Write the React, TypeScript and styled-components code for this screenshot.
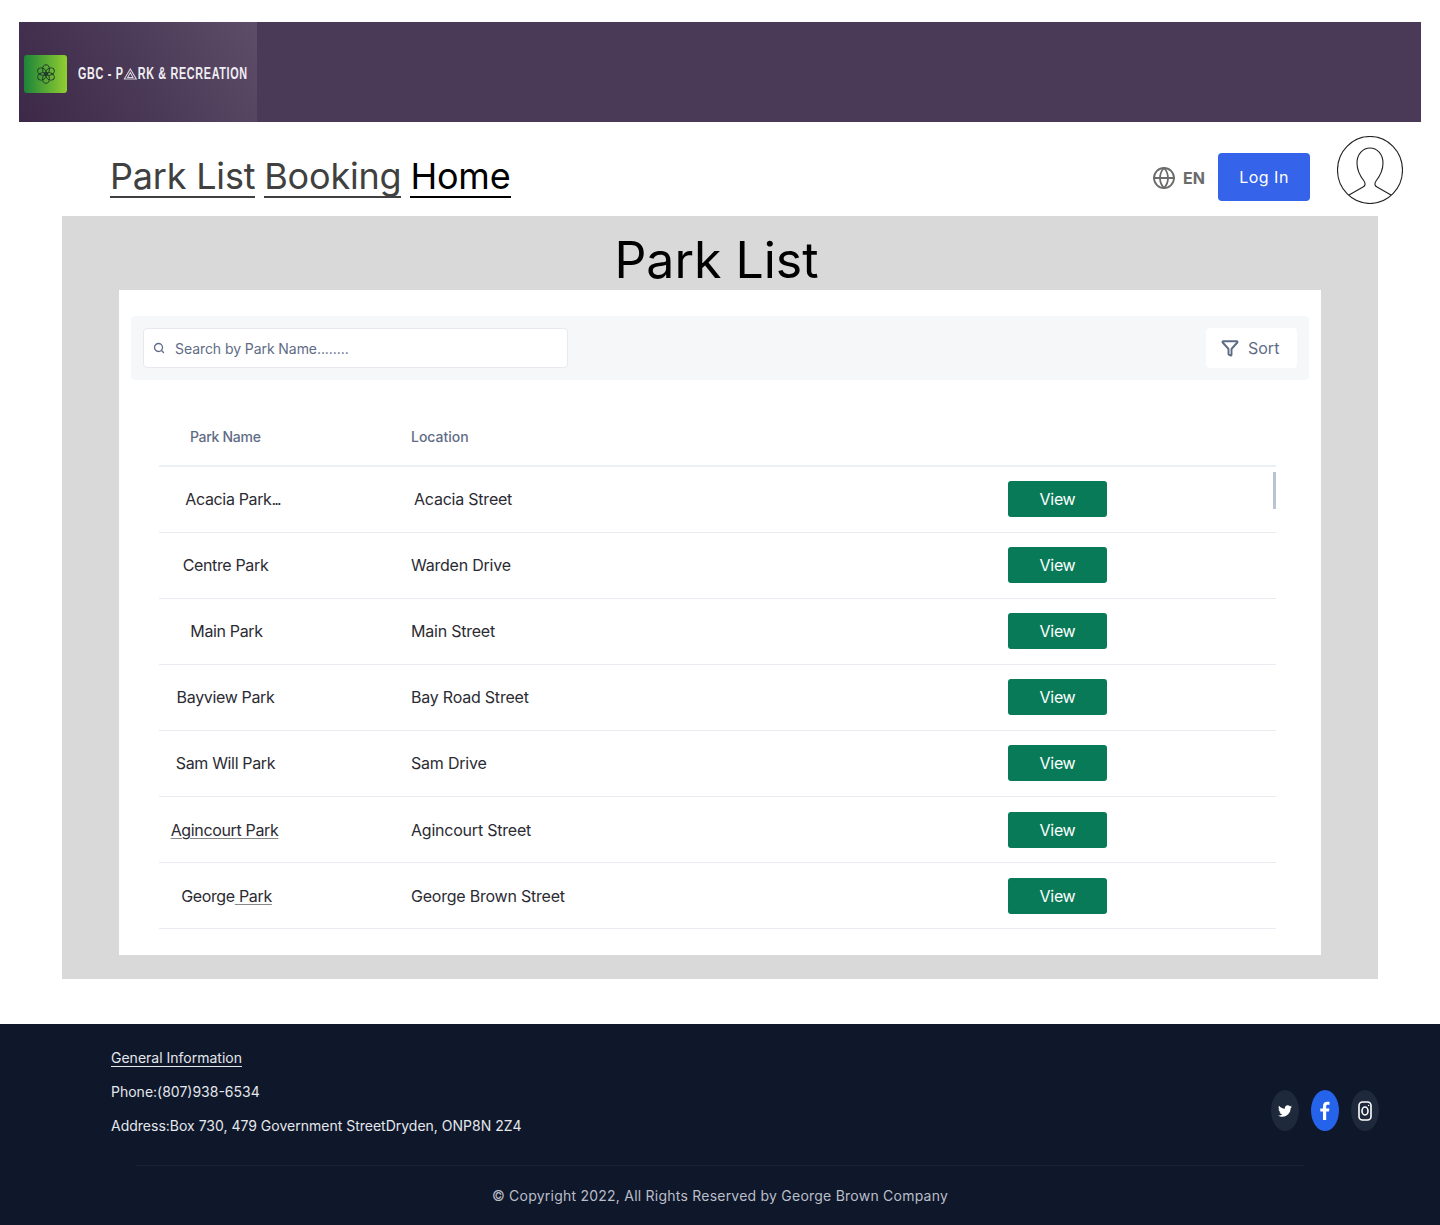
import React from "react";
import styled, { createGlobalStyle } from "styled-components";
import { Globe, Search, Funnel } from "lucide-react";
import { FaTwitter } from "react-icons/fa";

const Global = createGlobalStyle`
  html, body { margin: 0; padding: 0; background: #fff; }
  body { font-family: Inter, "Liberation Sans", sans-serif; }
  #root { padding-top: 22px; }
  * { box-sizing: border-box; }
`;

const Banner = styled.header`
  margin: 0 19px;
  height: 100px;
  background: #4b3a57;
`;
const Brand = styled.div`
  width: 238px;
  height: 100%;
  padding: 33px 0 0 5px;
  display: flex;
  align-items: flex-start;
  gap: 11px;
  background: linear-gradient(60deg, #3d2848 0%, #4b3a57 50%, #5d4d69 100%);
`;
const LogoTile = styled.div`
  flex: none;
  width: 43px;
  height: 38px;
  border-radius: 3px;
  display: flex;
  align-items: center;
  justify-content: center;
  background: linear-gradient(90deg, #1c8439 0%, #92ce31 100%);
`;
const BrandName = styled.div`
  flex: none;
  display: flex;
  align-items: center;
  height: 38px;
  color: #f1eef3;
  font-family: "Liberation Sans", sans-serif;
  font-weight: 700;
  font-size: 16px;
  letter-spacing: 1px;
  white-space: pre;
  transform: scaleX(0.675);
  transform-origin: left center;
`;

const NavBar = styled.nav`
  height: 94px;
  padding: 0 37px 0 110px;
  display: flex;
  align-items: center;
`;
const NavLinks = styled.div`
  display: flex;
  gap: 9px;
  margin-top: 18px;
`;
const NavLink = styled.a<{ $active?: boolean }>`
  font-family: Inter, sans-serif;
  font-size: 36px;
  line-height: 36px;
  padding-bottom: 2px;
  letter-spacing: -0.2px;
  color: ${(p) => (p.$active ? "#000" : "#404040")};
  border-bottom: 2px solid ${(p) => (p.$active ? "#000" : "#404040")};
`;
const NavRight = styled.div`
  margin: 2px 0 0 auto;
  display: flex;
  align-items: center;
`;
const Lang = styled.div`
  display: flex;
  align-items: center;
  gap: 7px;
  color: #6b6b6b;
  font-size: 16px;
  font-weight: 700;
  margin-top: 16px;
`;
const LoginButton = styled.button`
  width: 92px;
  height: 48px;
  margin: 14px 27px 0 13px;
  border: 0;
  border-radius: 4px;
  background: #3563e9;
  color: #fff;
  font-family: Inter, sans-serif;
  font-size: 16px;
  letter-spacing: 0.5px;
`;

const Panel = styled.main`
  margin: 0 62px;
  padding-bottom: 24px;
  background: #d9d9d9;
`;
const Title = styled.h1`
  margin: 0;
  height: 74px;
  padding-right: 7px;
  text-align: center;
  font-weight: 400;
  font-size: 50px;
  line-height: 88px;
  color: #000;
`;
const Card = styled.section`
  margin: 0 57px;
  height: 665px;
  padding: 26px 12px 0;
  background: #fff;
`;
const Toolbar = styled.div`
  height: 64px;
  padding: 12px;
  display: flex;
  justify-content: space-between;
  background: #f6f7f9;
  border-radius: 4px;
`;
const SearchBox = styled.div`
  width: 425px;
  height: 40px;
  padding: 0 9px;
  display: flex;
  align-items: center;
  gap: 10px;
  background: #fff;
  border: 1px solid #e7e9ee;
  border-radius: 4px;
  color: #5f6c86;
  font-size: 14px;
  letter-spacing: -0.07px;
`;
const SortButton = styled.button`
  width: 91px;
  height: 40px;
  padding: 0 0 0 15px;
  border: 0;
  border-radius: 4px;
  background: #fff;
  color: #5f6c86;
  font-family: Inter, sans-serif;
  font-size: 16px;
  display: flex;
  align-items: center;
  justify-content: flex-start;
  gap: 9px;
`;
const Table = styled.div`
  position: relative;
  margin: 0 33px 0 28px;
`;
const HeadRow = styled.div`
  height: 86.5px;
  display: grid;
  grid-template-columns: 252px 1fr;
  align-items: end;
  padding-bottom: 18.5px;
  border-bottom: 2px solid #edf0f3;
  color: #5f6c86;
  font-size: 14px;
  font-weight: 500;
  line-height: 18px;
`;
const HeadName = styled.div`
  padding-left: 31px;
  letter-spacing: -0.3px;
`;
const Row = styled.div`
  height: 66.1px;
  display: grid;
  grid-template-columns: 252px 597px 99px;
  align-items: center;
  border-bottom: 1px solid #e8ebf0;
  color: #2b2b33;
  font-size: 16px;
  letter-spacing: -0.22px;
`;
const NameCell = styled.div<{ $shift: number }>`
  width: ${(p) => 133 + p.$shift}px;
  text-align: center;
  white-space: nowrap;
  letter-spacing: -0.35px;
`;
const LocationCell = styled.div<{ $shift: number }>`
  padding-left: ${(p) => p.$shift}px;
`;
const Linked = styled.span`
  text-decoration: underline;
  text-decoration-thickness: 1px;
  text-underline-offset: 2px;
  text-decoration-color: #888;
`;
const TightDots = styled.span`
  letter-spacing: -1.9px;
`;
const ViewButton = styled.button`
  height: 36px;
  border: 0;
  border-radius: 3px;
  background: #087a58;
  color: #fff;
  font-family: Inter, sans-serif;
  font-size: 16px;
  letter-spacing: -0.3px;
`;
const Thumb = styled.div`
  position: absolute;
  top: 91.5px;
  right: 0;
  width: 3px;
  height: 37px;
  background: #bcc4d2;
`;

const Footer = styled.footer`
  margin-top: 45px;
  height: 201px;
  padding-top: 25px;
  background: #0f172a;
  color: #e4e7ec;
  font-size: 14px;
`;
const FooterTop = styled.div`
  height: 116px;
  padding: 0 61px 0 111px;
  display: flex;
  justify-content: space-between;
  align-items: flex-start;
`;
const InfoList = styled.div`
  display: flex;
  flex-direction: column;
  gap: 17px;
  line-height: 17px;
`;
const InfoHeading = styled.a`
  text-decoration: underline;
  text-underline-offset: 3px;
`;
const Socials = styled.div`
  display: flex;
  gap: 12px;
  margin-top: 41px;
`;
const Social = styled.a<{ $active?: boolean }>`
  width: 28px;
  height: 41px;
  border-radius: 50%;
  display: flex;
  align-items: center;
  justify-content: center;
  color: #fff;
  background: ${(p) => (p.$active ? "#2563eb" : "#1e293b")};
`;
const Divider = styled.div`
  margin: 0 135px;
  height: 1px;
  background: #1a2336;
`;
const Copyright = styled.div`
  margin-top: 21px;
  text-align: center;
  line-height: 17px;
  letter-spacing: 0.23px;
  color: #b9bec8;
  font-family: Inter, sans-serif;
`;

const parks = [
  { name: <>Acacia Park<TightDots>...</TightDots></>, shift: 14, loc: "Acacia Street", locShift: 3 },
  { name: <>Centre Park</>, shift: 0, loc: "Warden Drive", locShift: 0 },
  { name: <>Main Park</>, shift: 2, loc: "Main Street", locShift: 0 },
  { name: <>Bayview Park</>, shift: 0, loc: "Bay Road Street", locShift: 0 },
  { name: <>Sam Will Park</>, shift: 0, loc: "Sam Drive", locShift: 0 },
  { name: <Linked>Agincourt Park</Linked>, shift: -2, loc: "Agincourt Street", locShift: 0 },
  { name: <>George<Linked> Park</Linked></>, shift: 2, loc: "George Brown Street", locShift: 0 },
];

const FlowerMark = () => (
  <svg width="20" height="20" viewBox="0 0 20 20" fill="none" stroke="#1f3a2a" strokeWidth="1">
    {[0, 60, 120, 180, 240, 300].map((a) => (
      <ellipse key={a} cx="10" cy="5.2" rx="3.4" ry="4.4" transform={`rotate(${a} 10 10)`} />
    ))}
    <circle cx="10" cy="10" r="1.8" />
  </svg>
);

const TriangleMark = () => (
  <svg width="21" height="12" viewBox="0 0 13 12" preserveAspectRatio="none" fill="none" stroke="#d8d3dc" strokeWidth="1">
    <path d="M6.5 1 12 11H1Z" />
    <path d="M6.5 4.5 9 9.5H4Z" />
  </svg>
);

const AvatarMark = () => (
  <svg width="66" height="68" viewBox="0 0 66 68" fill="none" stroke="#222" strokeWidth="1.1">
    <ellipse cx="33" cy="34" rx="32.5" ry="33.5" />
    <path d="M12 59l14-8c2-1 3-3 1-6-4-5-7-10-7-18 0-9 6-15 13-15s13 6 13 15c0 8-3 13-7 18-2 3-1 5 1 6l14 8" />
  </svg>
);

const FacebookMark = () => (
  <svg width="10" height="20" viewBox="0 0 10 20" fill="#fff">
    <path d="M6.2 19V10.6H9l.4-3.2H6.2V5.3c0-.9.3-1.6 1.6-1.6h1.7V.9C9.2.9 8.2.8 7.1.8 4.7.8 3 2.3 3 5v2.4H.3v3.2H3V19z" />
  </svg>
);

const InstagramMark = () => (
  <svg width="14" height="20" viewBox="0 0 14 20" fill="none" stroke="#fff" strokeWidth="1.6">
    <rect x="1" y="1" width="12" height="18" rx="3.5" />
    <ellipse cx="7" cy="10" rx="3" ry="4" />
    <circle cx="10.6" cy="4.4" r="0.7" fill="#fff" stroke="none" />
  </svg>
);

export default function App() {
  return (
    <>
      <Global />
      <Banner>
        <Brand>
          <LogoTile>
            <FlowerMark />
          </LogoTile>
          <BrandName>
            GBC - P<TriangleMark />RK &amp; RECREATION
          </BrandName>
        </Brand>
      </Banner>
      <NavBar>
        <NavLinks>
          <NavLink>Park List</NavLink>
          <NavLink>Booking</NavLink>
          <NavLink $active>Home</NavLink>
        </NavLinks>
        <NavRight>
          <Lang>
            <Globe size={24} strokeWidth={1.8} />
            EN
          </Lang>
          <LoginButton>Log In</LoginButton>
          <AvatarMark />
        </NavRight>
      </NavBar>
      <Panel>
        <Title>Park List</Title>
        <Card>
          <Toolbar>
            <SearchBox>
              <Search size={12} strokeWidth={2.6} />
              Search by Park Name........
            </SearchBox>
            <SortButton>
              <Funnel size={18} strokeWidth={2.6} />
              Sort
            </SortButton>
          </Toolbar>
          <Table>
            <HeadRow>
              <HeadName>Park Name</HeadName>
              <div>Location</div>
            </HeadRow>
            {parks.map((p) => (
              <Row key={p.loc}>
                <NameCell $shift={p.shift}>{p.name}</NameCell>
                <LocationCell $shift={p.locShift}>{p.loc}</LocationCell>
                <ViewButton>View</ViewButton>
              </Row>
            ))}
            <Thumb />
          </Table>
        </Card>
      </Panel>
      <Footer>
        <FooterTop>
          <InfoList>
            <div><InfoHeading>General Information</InfoHeading></div>
            <div>Phone:(807)938-6534</div>
            <div>Address:Box 730, 479 Government StreetDryden, ONP8N 2Z4</div>
          </InfoList>
          <Socials>
            <Social><FaTwitter size={14} /></Social>
            <Social $active><FacebookMark /></Social>
            <Social><InstagramMark /></Social>
          </Socials>
        </FooterTop>
        <Divider />
        <Copyright>© Copyright 2022, All Rights Reserved by George Brown Company</Copyright>
      </Footer>
    </>
  );
}
